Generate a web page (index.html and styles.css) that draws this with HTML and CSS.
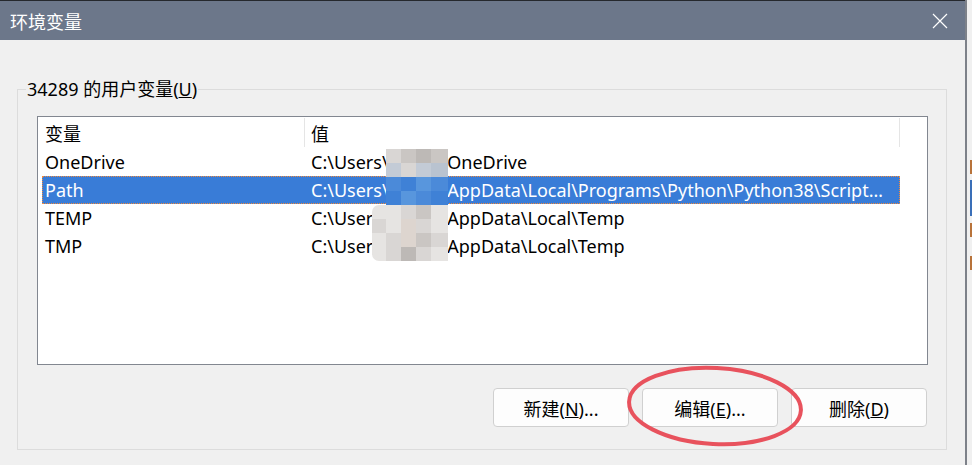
FILE: index.html
```html
<!DOCTYPE html>
<html lang="zh-CN">
<head>
    <meta charset="UTF-8">
    <title>环境变量</title>
    <link rel="stylesheet" href="styles.css">
</head>
<body>
    <div class="screen">
        <div class="dialog">
            <div class="titlebar">
                <span class="title">环境变量</span>
                <svg class="close" width="16" height="16" viewBox="0 0 16 16">
                    <path d="M1 1 L15 15 M15 1 L1 15" stroke="#fff" stroke-width="1.2" fill="none"/>
                </svg>
            </div>
            <div class="content">
                <fieldset class="group">
                    <legend>34289 的用户变量(<u>U</u>)</legend>
                    <div class="list">
                        <div class="list-head">
                            <div class="head-name">变量</div>
                            <div class="head-value">值</div>
                        </div>
                        <div class="rows">
                            <div class="row">
                                <div class="cell-name">OneDrive</div>
                                <div class="cell-value">C:\Users\<span class="user"></span>\OneDrive</div>
                            </div>
                            <div class="row selected">
                                <div class="cell-name">Path</div>
                                <div class="cell-value">C:\Users\<span class="user"></span>\AppData\Local\Programs\Python\Python38\Scripts\;C:\Users\AppData\Local\Programs\Python\Python38\</div>
                            </div>
                            <div class="row">
                                <div class="cell-name">TEMP</div>
                                <div class="cell-value">C:\Users\<span class="user"></span>\AppData\Local\Temp</div>
                            </div>
                            <div class="row">
                                <div class="cell-name">TMP</div>
                                <div class="cell-value">C:\Users\<span class="user"></span>\AppData\Local\Temp</div>
                            </div>
                        </div>
                        <!-- pixelated cover over the user name -->
                        <div class="mosaic">
                            <i></i><i class="g2"></i><i class="g3"></i><i class="g4"></i><i class="g3"></i>
                            <i></i><i class="s1"></i><i class="g2"></i><i class="s1"></i><i class="s2"></i>
                            <i></i><i class="b1"></i><i class="b2"></i><i class="b3"></i><i class="b1"></i>
                            <i></i><i class="b2"></i><i class="b3"></i><i class="b1"></i><i class="b2"></i>
                            <i class="g1 rl"></i><i class="g1"></i><i class="g2"></i><i class="g3"></i><i class="g1"></i>
                            <i class="g2"></i><i class="g1"></i><i class="g5"></i><i class="g2"></i><i class="g1"></i>
                            <i class="g1"></i><i class="g2"></i><i class="g5"></i><i class="g3"></i><i class="g2"></i>
                            <i class="g1 rlb"></i><i class="g2"></i><i class="g4"></i><i class="g2"></i><i class="g1"></i>
                        </div>
                    </div>
                    <div class="buttons">
                        <button>新建(<u>N</u>)...</button>
                        <button>编辑(<u>E</u>)...</button>
                        <button>删除(<u>D</u>)</button>
                    </div>
                    <svg class="mark" width="200" height="100" viewBox="0 0 200 100">
                        <ellipse cx="100" cy="50" rx="86" ry="38" transform="rotate(3 100 50)" fill="none" stroke="#e8525d" stroke-width="4"/>
                    </svg>
                </fieldset>
            </div>
        </div>
        <div class="edge">
            <div class="edge-line"></div>
            <div class="backdrop">
                <span class="bit orange" style="top:160px"></span>
                <span class="bit blue" style="top:180px"></span>
                <span class="bit orange" style="top:223px"></span>
                <span class="bit orange" style="top:256px"></span>
            </div>
        </div>
    </div>
</body>
</html>
```

FILE: styles.css
```css
body {
    margin: 0;
    background: #f0f0f0;
    font-family: "Noto Sans", "Noto Sans CJK SC", sans-serif;
    font-size: 18px;
    color: #000;
}
.screen {
    display: flex;
    width: 972px;
    height: 465px;
    overflow: hidden;
}
.dialog {
    width: 965px;
    display: flex;
    flex-direction: column;
    border-top: 1px solid #25282d;
}
.titlebar {
    height: 39px;
    background: #6c778a;
    color: #fff;
    display: flex;
    align-items: center;
    justify-content: space-between;
    padding: 0 17px 0 10px;
}
.title {
    font-family: "Noto Sans CJK SC", sans-serif;
    font-size: 18px;
}
.content {
    flex: 1;
    padding: 37px 0 0 17px;
}
.group {
    position: relative;
    margin: 0;
    width: 930px;
    height: 373px;
    box-sizing: border-box;
    border: 1px solid #dcdcdc;
    padding: 0 18px 0 19px;
}
.group legend {
    margin-left: -11px;
    padding: 0 1px;
    line-height: 25px;
}
.list {
    position: relative;
    margin-top: 14px;
    width: 891px;
    height: 249px;
    box-sizing: border-box;
    border: 1px solid #828790;
    background: #fff;
}
.list-head {
    display: flex;
    height: 30px;
    align-items: stretch;
}
.head-name,
.head-value {
    display: flex;
    align-items: center;
    margin-top: 1px;
    border-right: 1px solid #e5e5e5;
    box-sizing: border-box;
}
.head-name {
    width: 267px;
    padding-left: 7px;
}
.head-value {
    width: 595px;
    padding-left: 6px;
}
.rows {
    padding-top: 1px;
}
.row {
    display: flex;
    align-items: center;
    margin-left: 4px;
    width: 858px;
    height: 28px;
    box-sizing: border-box;
    white-space: nowrap;
}
.row.selected {
    background: #397cd7;
    color: #fff;
    outline: 1px dotted #f08a3c;
    outline-offset: -1px;
}
.cell-name {
    width: 262px;
    padding-left: 3px;
    box-sizing: border-box;
}
.cell-value {
    flex: 1;
    min-width: 0;
    padding: 0 10px 0 7px;
    overflow: hidden;
    text-overflow: ellipsis;
}
.user {
    display: inline-block;
    width: 52px;
}
.mosaic {
    position: absolute;
    left: 334px;
    top: 32px;
    display: grid;
    grid-template-columns: 14px 15px 15px 15px 17px;
    grid-auto-rows: 14px;
}
.mosaic .g1 { background: #e6e4e2; }
.mosaic .g2 { background: #d9d6d4; }
.mosaic .g3 { background: #cac6c3; }
.mosaic .g4 { background: #bdb9b6; }
.mosaic .g5 { background: #ddd5cf; }
.mosaic .s1 { background: #c3cbd6; }
.mosaic .s2 { background: #b9c3d0; }
.mosaic .b1 { background: #4b8ad9; }
.mosaic .b2 { background: #3f81d6; }
.mosaic .b3 { background: #5896dd; }
.mosaic .rl { border-radius: 7px 0 0 0; }
.mosaic .rlb { border-radius: 0 0 0 7px; }
.buttons {
    display: flex;
    justify-content: flex-end;
    gap: 13px;
    margin-top: 23px;
    margin-right: 1px;
}
.buttons button {
    width: 136px;
    height: 39px;
    background: #fdfdfd;
    border: 1px solid #d0d0d0;
    border-radius: 4px;
    font-family: "Noto Sans", "Noto Sans CJK SC", sans-serif;
    font-size: 18px;
    color: #000;
}
.mark {
    position: absolute;
    left: 597px;
    top: 254px;
}
.edge {
    flex: 1;
    display: flex;
}
.edge-line {
    width: 2px;
    background: #7d8189;
}
.backdrop {
    position: relative;
    flex: 1;
    background: #f0f0f0;
}
.bit {
    position: absolute;
    left: 3px;
    width: 2px;
    height: 14px;
}
.bit.orange { background: #b8733a; }
.bit.blue { background: #3a6fb8; height: 36px; }
```
